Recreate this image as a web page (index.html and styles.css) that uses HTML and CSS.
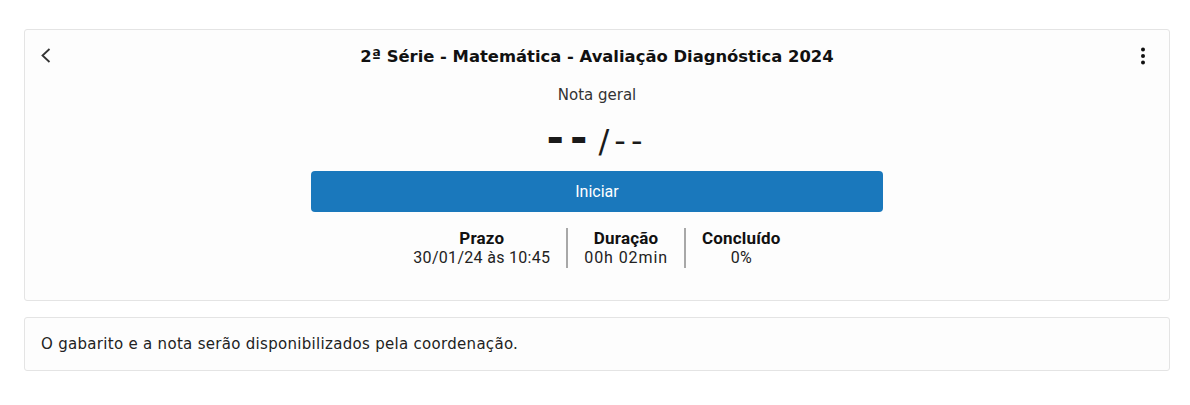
FILE: index.html
```html
<!DOCTYPE html>
<html lang="pt-BR">
<head>
    <meta charset="UTF-8">
    <meta name="viewport" content="width=device-width, initial-scale=1.0">
    <title>Avaliação Diagnóstica</title>
    <link rel="stylesheet" href="styles.css">
</head>
<body>

<main class="page">
    <section class="card summary">
        <div class="summary-head">
            <button class="icon-btn" aria-label="Voltar">
                <svg width="24" height="24" viewBox="0 0 24 24"><polyline points="10.5,5 3.5,11.5 10.5,18" fill="none" stroke="#333" stroke-width="1.8"/></svg>
            </button>
            <h1 class="title">2ª Série - Matemática - Avaliação Diagnóstica 2024</h1>
            <button class="icon-btn" aria-label="Mais opções">
                <svg width="24" height="24" viewBox="0 0 24 24"><circle cx="12" cy="5.5" r="2" fill="#111"/><circle cx="12" cy="12" r="2" fill="#111"/><circle cx="12" cy="18.5" r="2" fill="#111"/></svg>
            </button>
        </div>

        <p class="grade-label">Nota geral</p>
        <p class="grade"><span class="grade-value">--</span> <span class="grade-total">/--</span></p>

        <button class="start-btn">Iniciar</button>

        <div class="stats">
            <div class="stat">
                <strong>Prazo</strong>
                <span>30/01/24 às 10:45</span>
            </div>
            <div class="stat">
                <strong>Duração</strong>
                <span class="wide">00h 02min</span>
            </div>
            <div class="stat">
                <strong>Concluído</strong>
                <span>0%</span>
            </div>
        </div>
    </section>

    <section class="card notice">
        O gabarito e a nota serão disponibilizados pela coordenação.
    </section>
</main>

</body>
</html>
```

FILE: styles.css
```css
body {
    font-family: "DejaVu Sans", Arial, sans-serif;
    background-color: white;
    color: #222;
    margin: 0;
    padding: 0;
}

.page {
    padding: 29px 20px 0 24px;
    display: flex;
    flex-direction: column;
    gap: 16px;
}

.card {
    background-color: #fdfdfd;
    border: 1px solid #e4e4e4;
    border-radius: 3px;
}

.summary {
    display: flex;
    flex-direction: column;
    align-items: center;
    padding: 14px 14px 32px 14px;
}

.summary-head {
    width: 100%;
    display: flex;
    align-items: center;
    justify-content: space-between;
}

.icon-btn {
    background: none;
    border: none;
    padding: 0;
    width: 24px;
    height: 24px;
    cursor: pointer;
}

.title {
    font-size: 16.4px;
    font-weight: bold;
    color: #111;
    margin: 0;
}

.grade-label {
    font-size: 15px;
    color: #333;
    margin: 18px 0 0 0;
}

.grade {
    margin: 12px 0 0 0;
    color: #1a1a1a;
    line-height: 44px;
}

.grade-value {
    font-size: 42px;
    font-weight: bold;
    letter-spacing: 6px;
}

.grade-total {
    font-size: 32px;
    letter-spacing: 5px;
}

.start-btn {
    width: 572px;
    height: 41px;
    margin-top: 2px;
    background-color: #1a78bc;
    color: white;
    border: none;
    border-radius: 4px;
    font-family: Roboto, Arial, sans-serif;
    font-size: 16px;
    cursor: pointer;
}

.stats {
    display: flex;
    margin-top: 16px;
}

.stat {
    display: flex;
    flex-direction: column;
    align-items: center;
    padding: 0 16px;
    font-family: Roboto, Arial, sans-serif;
    font-size: 16px;
    letter-spacing: 0.3px;
    color: #222;
    line-height: 20px;
}

.stat + .stat {
    border-left: 2px solid #a8a8a8;
}

.stat strong {
    font-size: 17px;
    letter-spacing: 0.2px;
    color: #111;
}

.stat .wide {
    letter-spacing: 0.9px;
}

.notice {
    padding: 17px 16px;
    font-size: 15px;
    letter-spacing: 0.3px;
    color: #222;
}
```
